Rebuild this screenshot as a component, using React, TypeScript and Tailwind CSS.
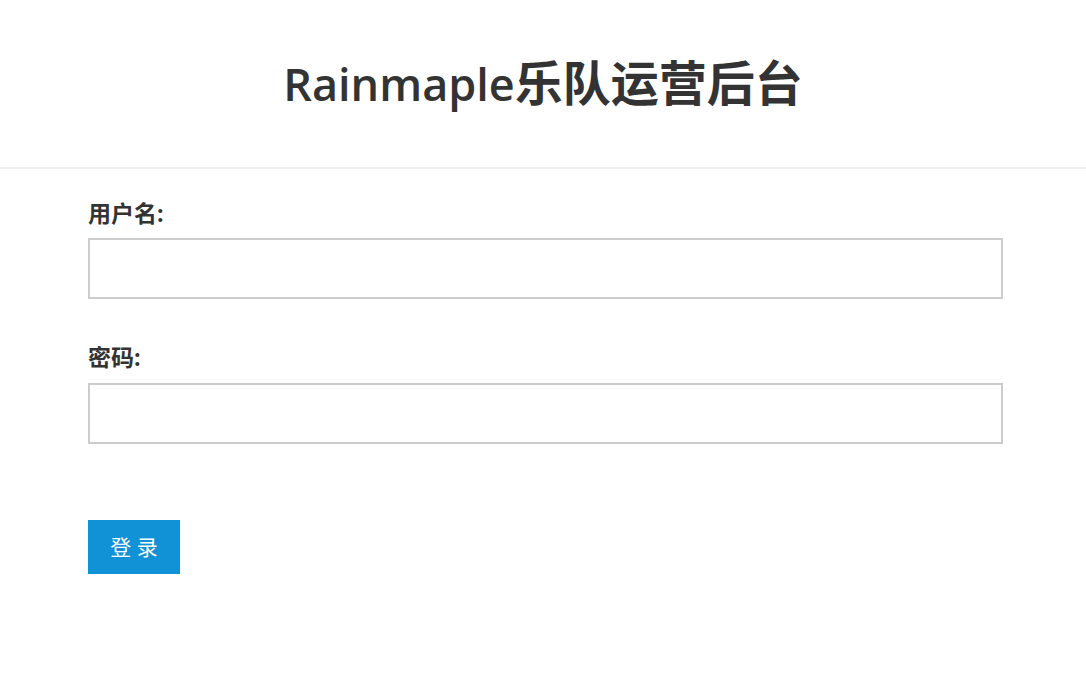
import React from "react";

export default function App() {
  return (
    <div className="min-h-screen bg-white" style={{ fontFamily: '"Open Sans", "Noto Sans CJK SC", sans-serif' }}>
      <header className="h-[169px] border-b-2 border-[#eeeeee] flex items-center justify-center">
        <h1 className="leading-none text-[#333333] mb-[2px] flex items-baseline">
          <span className="text-[45px] font-semibold">Rainmaple</span>
          <span className="text-[48px] font-bold">乐队运营后台</span>
        </h1>
      </header>
      <form className="pl-[88px] pr-[83px] pt-[29px]" onSubmit={(e) => e.preventDefault()}>
        <label className="block text-[23px] font-bold text-[#333333] leading-[30px]">用户名:</label>
        <input type="text" className="mt-[10px] block w-full h-[61px] border-2 border-[#cccccc] outline-none px-3" />
        <label className="block mt-[43px] text-[23px] font-bold text-[#333333] leading-[30px]">密码:</label>
        <input type="password" className="mt-[11px] block w-full h-[61px] border-2 border-[#cccccc] outline-none px-3" />
        <button type="submit" className="mt-[76px] w-[92px] h-[54px] bg-[#1191d6] text-white text-[21px] leading-none">
          登 录
        </button>
      </form>
    </div>
  );
}
